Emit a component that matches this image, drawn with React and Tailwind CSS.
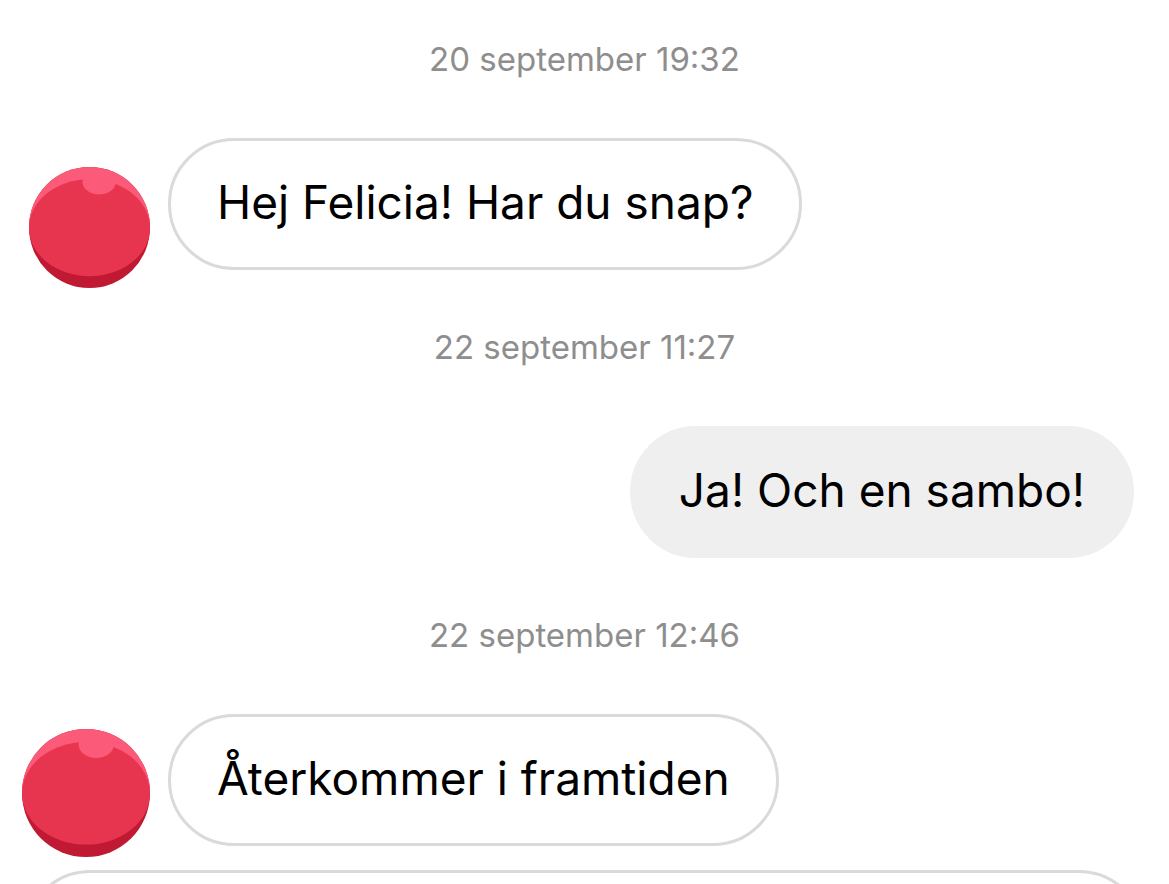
import React from "react";

function Avatar({ className }) {
  return (
    <svg viewBox="0 0 362 362" className={className} role="img" aria-label="Avatar">
      <circle cx="181" cy="181" r="181" fill="#c01933" />
      <path d="M0 181a181 181 0 0 1 362 0z" fill="#fb5a78" />
      <ellipse cx="181" cy="182" rx="181" ry="145" fill="#e8354f" />
      <ellipse cx="210" cy="44" rx="50" ry="38" fill="#fb5a78" />
    </svg>
  );
}

function Timestamp({ children }) {
  return (
    <time className="block pt-[39px] pb-[59px] text-center text-[33px] leading-10 text-[#8e8e8e]">
      {children}
    </time>
  );
}

function Bubble({ sent = false, children }) {
  return (
    <p
      className={
        sent
          ? "rounded-[66px] border-3 border-[#efefef] bg-[#efefef] px-[46px] pt-[30px] pb-[34px] text-[46px] leading-[62px]"
          : "rounded-[66px] border-3 border-[#dadada] bg-white px-[46px] pt-[30px] pb-[34px] text-[46px] leading-[62px]"
      }
    >
      {children}
    </p>
  );
}

export default function App() {
  return (
    <main className="h-screen overflow-hidden bg-white font-[Inter,'Liberation_Sans',sans-serif] text-black">
      <section>
        <Timestamp>20 september 19:32</Timestamp>
        <div className="flex min-h-[150px] items-start">
          <div className="flex w-[168px] shrink-0 justify-end pt-[29px] pr-[18px]">
            <Avatar className="size-[121px]" />
          </div>
          <Bubble>Hej Felicia! Har du snap?</Bubble>
        </div>
      </section>

      <section>
        <Timestamp>22 september 11:27</Timestamp>
        <div className="flex min-h-[150px] items-start justify-end pr-[35px]">
          <Bubble sent>Ja! Och en sambo!</Bubble>
        </div>
      </section>

      <section>
        <Timestamp>22 september 12:46</Timestamp>
        <div className="flex min-h-[150px] items-start">
          <div className="flex w-[168px] shrink-0 justify-end pt-[15px] pr-[18px]">
            <Avatar className="size-32" />
          </div>
          <Bubble>Återkommer i framtiden</Bubble>
        </div>
      </section>

      <div className="mx-6 mt-1.5 h-[132px] rounded-[66px] border-3 border-[#dadada] bg-white" />
    </main>
  );
}
